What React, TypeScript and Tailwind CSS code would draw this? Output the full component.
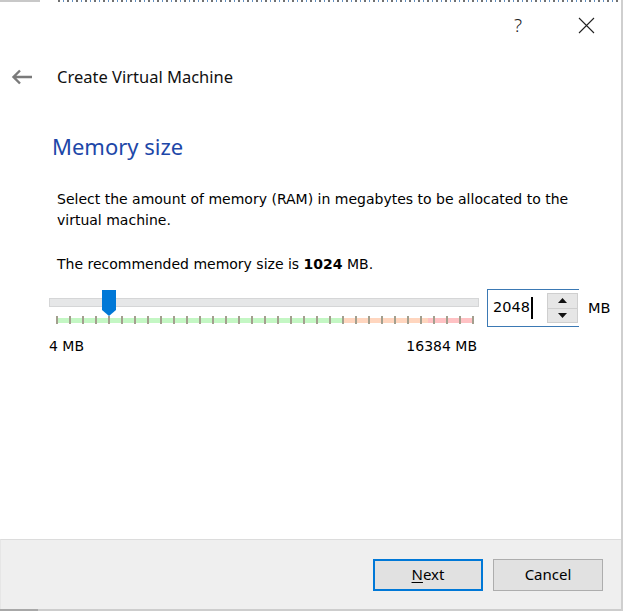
import React from 'react';

const TICKS = Array.from({ length: 33 }, (_, i) => i);

function BackArrow() {
    return (
        <svg width="22" height="16" viewBox="0 0 22 16" fill="none">
            <path d="M21 8H3M9 1.5L2.5 8L9 14.5" stroke="#7a7a7a" strokeWidth="2.4" />
        </svg>
    );
}

function CloseIcon() {
    return (
        <svg width="17" height="17" viewBox="0 0 17 17" fill="none">
            <path d="M1 1L16 16M16 1L1 16" stroke="#222" strokeWidth="1.1" />
        </svg>
    );
}

function SpinButtons() {
    return (
        <div className="flex flex-col w-[31px] h-[30px] border border-[#cfcfcf] bg-[#e6e6e6]">
            <div className="flex-1 flex items-center justify-center border-b border-[#cfcfcf]">
                <svg width="9" height="5" viewBox="0 0 9 5"><path d="M0 5L4.5 0L9 5Z" fill="#111" /></svg>
            </div>
            <div className="flex-1 flex items-center justify-center">
                <svg width="9" height="5" viewBox="0 0 9 5"><path d="M0 0L4.5 5L9 0Z" fill="#111" /></svg>
            </div>
        </div>
    );
}

export default function App() {
    const body = { fontFamily: '"DejaVu Sans", sans-serif' };
    const ui = { fontFamily: '"Noto Sans", sans-serif' };

    return (
        <div className="w-[624px] h-[611px] flex bg-white overflow-hidden">
            <div className="w-[621px] h-[611px] flex flex-col">
                {/* edge of the window behind */}
                <div className="h-[2px] shrink-0 flex">
                    <div className="w-[40px] bg-[#c8c8c8]" />
                    <div className="w-[18px]" />
                    <div className="flex-1 bg-[repeating-linear-gradient(90deg,#333_0px,#333_2px,transparent_2px,transparent_5px,#1c5fa8_5px,#1c5fa8_6px,transparent_6px,transparent_9px)] opacity-70" />
                </div>

                {/* title bar */}
                <div className="h-[46px] shrink-0 flex items-center justify-end pr-[26px] gap-[56px]">
                    <span className="text-[19px] text-[#222] leading-none font-light" style={ui}>?</span>
                    <CloseIcon />
                </div>

                {/* wizard header */}
                <div className="h-[58px] shrink-0 flex items-center pl-[11px]">
                    <BackArrow />
                    <span className="ml-[24px] text-[16.5px] text-[#111]" style={ui}>Create Virtual Machine</span>
                </div>

                <div className="flex-1 flex flex-col pl-[52px]">
                    <h1 className="mt-[25px] text-[22px] leading-[30px] text-[#1d47a8]" style={ui}>Memory size</h1>

                    <p className="mt-[28px] pl-[5px] text-[14px] leading-[21px] text-black w-[540px]" style={body}>
                        Select the amount of memory (RAM) in megabytes to be allocated to the virtual machine.
                    </p>
                    <p className="mt-[23px] pl-[5px] text-[14px] leading-[21px] text-black" style={body}>
                        The recommended memory size is <b className="font-bold">1024</b> MB.
                    </p>

                    {/* slider + spinbox */}
                    <div className="mt-[15px] flex items-start">
                        <div className="w-[430px] ml-[-3px] flex flex-col">
                            <div className="relative h-[28px]">
                                <div className="absolute left-0 right-0 top-[8px] h-[9px] bg-[#e6e7e8] border border-[#d5d6d7]" />
                                <svg className="absolute left-[53px] top-[0px]" width="14" height="26" viewBox="0 0 14 26">
                                    <path d="M0 0H14V20L7 26L0 20Z" fill="#0078d7" />
                                </svg>
                                <div className="absolute left-[7px] right-[5px] top-[27px] h-[7px] flex">
                                    <div className="h-[5px] mt-[1px] bg-[#c4f7c4] w-[69%]" />
                                    <div className="h-[5px] mt-[1px] bg-[#ffd6bf] w-[20%]" />
                                    <div className="h-[5px] mt-[1px] bg-[#ffc2c4] flex-1" />
                                </div>
                                <div className="absolute left-[7px] right-[5px] top-[26px] h-[8px] flex justify-between">
                                    {TICKS.map(t => (
                                        <div key={t} className="w-[2px] h-[8px] bg-[#a39f8e]" />
                                    ))}
                                </div>
                            </div>
                            <div className="mt-[18px] flex justify-between text-[14px] text-black" style={body}>
                                <span>4 MB</span>
                                <span className="mr-[2px]">16384 MB</span>
                            </div>
                        </div>

                        <div className="ml-[8px] -mt-[1px] w-[92px] h-[38px] border-l border-t border-b border-[#3b79b4] flex items-center pl-[5px]">
                            <span className="text-[14.5px] text-black" style={body}>2048</span>
                            <div className="w-[2px] h-[22px] bg-black ml-[1px]" />
                            <div className="ml-auto mr-[1px]">
                                <SpinButtons />
                            </div>
                        </div>
                        <span className="ml-[9px] mt-[8px] text-[14.5px] text-black" style={body}>MB</span>
                    </div>
                </div>

                {/* footer */}
                <div className="h-[70px] shrink-0 bg-[#efefef] border-t border-[#dcdcdc] border-l border-l-[#e6e6e6] flex items-center justify-end pr-[18px] gap-[10px]">
                    <button className="w-[110px] h-[32px] bg-[#e1e1e1] border-2 border-[#0078d7] text-[15px] text-black" style={ui}>
                        <span className="underline underline-offset-2">N</span>ext
                    </button>
                    <button className="w-[110px] h-[32px] bg-[#e1e1e1] border border-[#adadad] text-[15px] text-black" style={ui}>
                        Cancel
                    </button>
                </div>
                <div className="h-[2px] shrink-0 flex">
                    <div className="w-[38px] bg-[#a8a8a8]" />
                    <div className="flex-1 bg-[#cdcdcd]" />
                </div>
            </div>
            <div className="w-[3px] h-[611px] flex">
                <div className="w-[2px] bg-[#cfcfcf]" />
                <div className="w-[1px] bg-white" />
            </div>
        </div>
    );
}
